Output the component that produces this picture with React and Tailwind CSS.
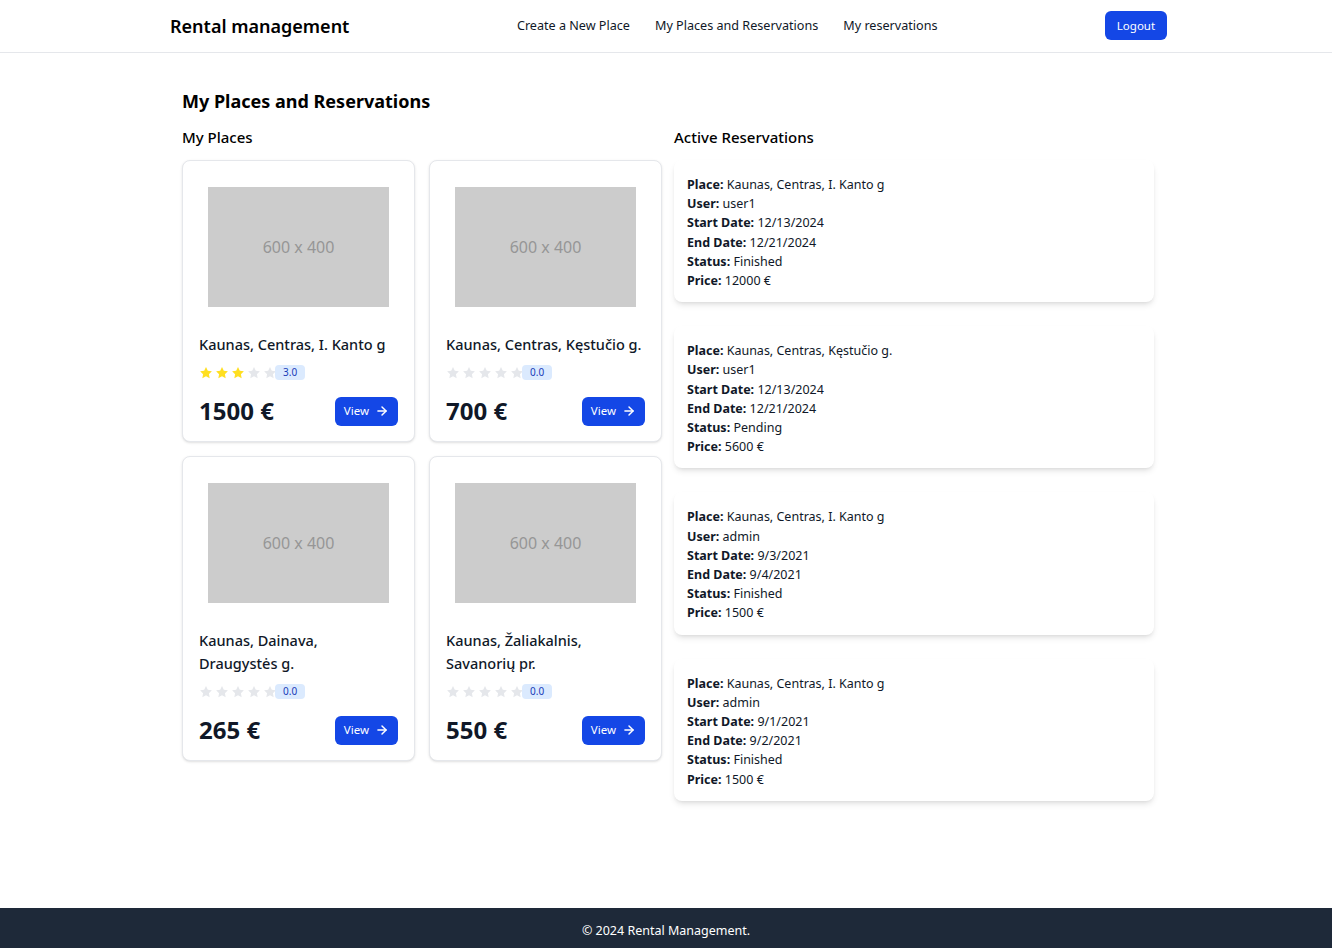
import { ArrowRight } from 'lucide-react'

const places = [
  { title: 'Kaunas, Centras, I. Kanto g', rating: 3, price: '1500 €' },
  { title: 'Kaunas, Centras, Kęstučio g.', rating: 0, price: '700 €' },
  { title: 'Kaunas, Dainava, Draugystės g.', rating: 0, price: '265 €' },
  { title: 'Kaunas, Žaliakalnis, Savanorių pr.', rating: 0, price: '550 €' },
]

const reservations = [
  { place: 'Kaunas, Centras, I. Kanto g', user: 'user1', start: '12/13/2024', end: '12/21/2024', status: 'Finished', price: '12000 €' },
  { place: 'Kaunas, Centras, Kęstučio g.', user: 'user1', start: '12/13/2024', end: '12/21/2024', status: 'Pending', price: '5600 €' },
  { place: 'Kaunas, Centras, I. Kanto g', user: 'admin', start: '9/3/2021', end: '9/4/2021', status: 'Finished', price: '1500 €' },
  { place: 'Kaunas, Centras, I. Kanto g', user: 'admin', start: '9/1/2021', end: '9/2/2021', status: 'Finished', price: '1500 €' },
]

function Star({ filled }) {
  return (
    <svg viewBox="0 0 24 24" className={`w-[14px] h-[14px] ${filled ? 'text-yellow-300' : 'text-gray-200'}`} fill="currentColor">
      <path d="M12 1.8l3.1 6.4 7 .9-5.1 4.9 1.3 7L12 17.6 5.7 21l1.3-7L1.9 9.1l7-.9z" />
    </svg>
  )
}

function PlaceCard({ title, rating, price }) {
  return (
    <div className="bg-white border border-gray-200 rounded-lg shadow-sm px-4 pt-[26px] pb-[14px] flex flex-col">
      <div className="mx-[9px] h-[120px] bg-[#cccccc] flex items-center justify-center text-[#969696] text-[16px]">
        600 x 400
      </div>
      <h5 className="mt-[26px] text-[14.5px] font-medium leading-[23px] text-gray-900">{title}</h5>
      <div className="flex items-center mt-[9px] mb-[15px]">
        <div className="flex gap-[2px]">
          {[1, 2, 3, 4, 5].map((i) => (
            <Star key={i} filled={i <= rating} />
          ))}
        </div>
        <span className="-ml-[2px] bg-blue-100 text-blue-800 text-[10px] leading-[15px] px-2 rounded">
          {rating.toFixed(1)}
        </span>
      </div>
      <div className="flex items-center justify-between mt-auto">
        <span className="text-2xl font-bold text-gray-900">{price}</span>
        <button className="flex items-center gap-[6px] bg-blue-700 text-white text-[11.5px] rounded-md h-[29px] px-[9px]">
          View
          <ArrowRight className="w-[14px] h-[14px]" strokeWidth={2.5} />
        </button>
      </div>
    </div>
  )
}

function ReservationCard({ r }) {
  const rows = [
    ['Place', r.place],
    ['User', r.user],
    ['Start Date', r.start],
    ['End Date', r.end],
    ['Status', r.status],
    ['Price', r.price],
  ]
  return (
    <div className="bg-white rounded-lg shadow-md px-[13px] pt-[15px] pb-[12px]">
      {rows.map(([k, v]) => (
        <p key={k} className="text-[12.5px] leading-[19.2px] text-gray-900">
          <span className="font-bold">{k}:</span> {v}
        </p>
      ))}
    </div>
  )
}

export default function App() {
  return (
    <div className="min-h-screen flex flex-col bg-white font-['Noto_Sans','Open_Sans',sans-serif] text-black">
      {/* nav */}
      <nav className="border-b border-gray-200 h-[53px]">
        <div className="w-[997px] ml-[170px] h-full flex items-center justify-between">
          <span className="text-[18px] font-semibold text-black">Rental management</span>
          <div className="flex gap-[25px] text-[12.6px] text-gray-900">
            <a>Create a New Place</a>
            <a>My Places and Reservations</a>
            <a>My reservations</a>
          </div>
          <button className="bg-blue-700 text-white text-[11.5px] rounded-md h-[29px] w-[62px] -mt-[1px]">Logout</button>
        </div>
      </nav>

      <main className="flex-1">
        <div className="w-[972px] ml-[182px] pt-[34px] pb-10">
          <h1 className="text-[18px] font-bold leading-7">My Places and Reservations</h1>
          <div className="grid grid-cols-2 gap-3 mt-[10px]">
            <div>
              <h2 className="text-[15px] font-medium leading-6 mb-[11px]">My Places</h2>
              <div className="grid grid-cols-2 gap-[14px]">
                {places.map((p) => (
                  <PlaceCard key={p.title} {...p} />
                ))}
              </div>
            </div>
            <div>
              <h2 className="text-[15px] font-medium leading-6 mb-[11px]">Active Reservations</h2>
              <div className="flex flex-col gap-[24px]">
                {reservations.map((r, i) => (
                  <ReservationCard key={i} r={r} />
                ))}
              </div>
            </div>
          </div>
        </div>
      </main>

      <footer className="bg-gray-800 h-10 flex items-center justify-center text-white text-[12.5px] pt-[7px]">
        © 2024 Rental Management.
      </footer>
    </div>
  )
}
